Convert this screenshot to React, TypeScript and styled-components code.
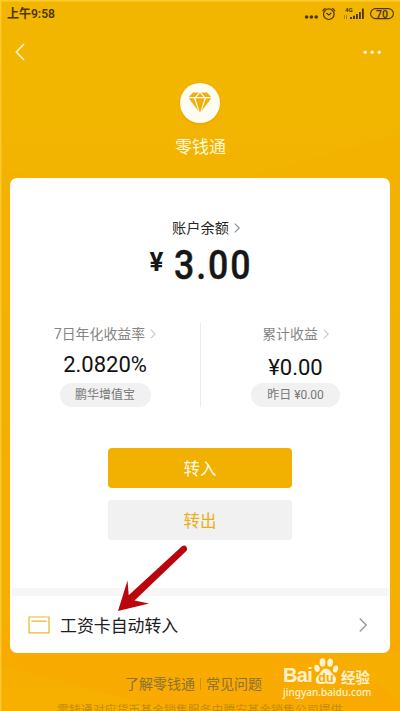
import React from 'react';
import styled, { createGlobalStyle } from 'styled-components';

const Global = createGlobalStyle`
  * { box-sizing: border-box; }
  body { margin: 0; font-family: Roboto, "Noto Sans CJK SC", sans-serif; }
`;

const Screen = styled.main`
  position: relative;
  display: flex;
  flex-direction: column;
  width: 400px;
  height: 711px;
  overflow: hidden;
  background: #f2b600;
  & > * { flex-shrink: 0; }
`;
const Backdrop = styled.svg`
  position: absolute;
  inset: 0;
`;
const StatusBar = styled.header`
  position: relative;
  display: flex;
  align-items: center;
  justify-content: space-between;
  height: 28px;
  padding: 0 6px 0 7px;
  color: #4a3508;
`;
const Clock = styled.span`
  font-size: 12px;
  line-height: 28px;
  font-weight: 600;
`;
const NavBar = styled.nav`
  position: relative;
  display: flex;
  align-items: center;
  justify-content: space-between;
  height: 47px;
  padding: 0 18px 0 15px;
`;
const Brand = styled.section`
  position: relative;
  display: flex;
  flex-direction: column;
  align-items: center;
  height: 103px;
  padding-top: 8px;
`;
const Badge = styled.div`
  display: flex;
  flex-shrink: 0;
  align-items: center;
  justify-content: center;
  width: 40px;
  height: 40px;
  border-radius: 50%;
  background: #fffdf3;
  box-shadow: 0 1px 2px #c8900066;
`;
const BrandName = styled.h1`
  margin: 12px 0 0 1px;
  font-size: 17px;
  line-height: 24px;
  font-weight: 400;
  color: #fff8da;
`;
const Card = styled.section`
  position: relative;
  display: flex;
  flex-direction: column;
  width: 380px;
  height: 475px;
  margin: 0 auto;
  border-radius: 7px;
  background: #fff;
`;
const Balance = styled.div`
  display: flex;
  flex-direction: column;
  align-items: center;
  height: 145px;
  padding-top: 40px;
`;
const Label = styled.div<{ $muted?: boolean }>`
  display: flex;
  align-items: center;
  gap: 5px;
  height: 20px;
  padding-left: ${p => (p.$muted ? 0 : 12)}px;
  font-size: ${p => (p.$muted ? 13.9 : 14.2)}px;
  line-height: 20px;
  white-space: nowrap;
  color: ${p => (p.$muted ? '#858585' : '#262626')};
`;
const Amount = styled.div`
  display: flex;
  align-items: flex-start;
  gap: 11px;
  width: 101px;
  margin-top: 3px;
  color: #171717;
  font-weight: 500;
  line-height: 48px;
`;
const Yen = styled.span`
  font-size: 26px;
  line-height: 43px;
  font-weight: 700;
`;
const Digits = styled.span`
  font-size: 41px;
  line-height: 49px;
  letter-spacing: 2.2px;
  transform: scaleX(0.87);
  transform-origin: left;
  -webkit-text-stroke: 0.4px #171717;
`;
const Stats = styled.div`
  display: grid;
  grid-template-columns: 190px 190px;
  height: 84px;
`;
const Stat = styled.div`
  display: flex;
  flex-direction: column;
  align-items: center;
  padding-top: 1px;
  & + & { border-left: 1px solid #ececec; }
`;
const Figure = styled.strong<{ $drop: number }>`
  height: 26px;
  margin-top: ${p => 8 + p.$drop}px;
  font-size: 22px;
  line-height: 26px;
  font-weight: 400;
  color: #111;
`;
const Pill = styled.span<{ $width: number; $rise: number }>`
  width: ${p => p.$width}px;
  height: 24px;
  margin-top: ${p => 5 - p.$rise}px;
  border-radius: 12px;
  background: #f1f1f1;
  text-align: center;
  font-size: 12px;
  line-height: 24px;
  color: #777;
`;
const Actions = styled.div`
  display: flex;
  flex-direction: column;
  gap: 12px;
  width: 184px;
  margin: 41px auto 0 98px;
`;
const Button = styled.button<{ $primary?: boolean }>`
  height: 40px;
  padding: 3px 0 0;
  border: 0;
  border-radius: 4px;
  font: 400 16.5px/37px Roboto, "Noto Sans CJK SC", sans-serif;
  background: ${p => (p.$primary ? '#f2b000' : '#f1f1f1')};
  color: ${p => (p.$primary ? '#fffbea' : '#ecae16')};
`;
const Band = styled.div`
  height: 8px;
  margin: 48px 1px 0 2px;
  background: #f6f6f6;
`;
const TransferRow = styled.div`
  display: flex;
  align-items: center;
  height: 57px;
  padding: 0 23px 0 18px;
`;
const RowText = styled.span`
  flex: 1;
  margin: 2px 0 0 10px;
  font-size: 16.9px;
  line-height: 26px;
  color: #202020;
`;
const Footer = styled.footer`
  position: relative;
  padding-top: 20px;
`;
const Links = styled.div`
  display: flex;
  align-items: center;
  margin-left: 125px;
  height: 22px;
  font-size: 14px;
  line-height: 22px;
  color: #8c7136;
`;
const Separator = styled.i`
  width: 1px;
  height: 12px;
  margin: 0 5px;
  background: #c89018;
`;
const Notice = styled.p`
  margin: 6px 0 0 57px;
  font-size: 11.9px;
  line-height: 18px;
  white-space: nowrap;
  color: #c68a0b;
`;
const Pointer = styled.svg`
  position: absolute;
  left: 110px;
  top: 540px;
`;
const Watermark = styled.div`
  position: absolute;
  left: 283px;
  top: 656px;
  width: 92px;
  color: #fff3cf;
`;
const WatermarkLogo = styled.div`
  display: flex;
  align-items: flex-end;
  height: 30px;
`;
const Latin = styled.span`
  width: 30px;
  font: 700 20px/22px "Liberation Sans", sans-serif;
  letter-spacing: -0.6px;
`;
const Han = styled.span`
  margin-left: 2px;
  font: 700 14.5px/19px "Noto Sans CJK SC", sans-serif;
`;
const Domain = styled.div`
  font: 500 10px/13px "Noto Sans", sans-serif;
  letter-spacing: 0.02px;
`;

const Chevron = ({ w = 6, h = 10, color = '#b5b5b5', stroke = 1.1 }) => (
  <svg width={w} height={h} viewBox={`0 0 ${w} ${h}`} fill="none" stroke={color} strokeWidth={stroke}>
    <path d={`M.8 .6 L${w - 0.8} ${h / 2} L.8 ${h - 0.6}`} />
  </svg>
);

const StatusIcons = () => (
  <svg width="92" height="20" viewBox="302 4 92 20" fill="none" stroke="#4a3508">
    <g fill="#4a3508" stroke="none">
      <circle cx="306.6" cy="17" r="1.8" />
      <circle cx="311.4" cy="17" r="1.8" />
      <circle cx="316.2" cy="17" r="1.8" />
      <path d="M350 19v-2h2v2zM353 19v-3.2h2V19zM356 19v-5h1.8v5zM359 19v-7h1.8v7zM362 19V8.4h1.8V19z" />
      <text x="345" y="12" fontSize="6" fontWeight="700" fontFamily="Roboto">4G</text>
      <text x="382" y="17.5" fontSize="10.5" fontWeight="600" fontFamily="Roboto" textAnchor="middle">70</text>
    </g>
    <circle cx="328.8" cy="14.2" r="5.3" strokeWidth="1.2" />
    <path d="M326.4 13l2.4 2 2.5-2M322.6 11.2a5 5 0 0 1 3-3M332 8.2a5 5 0 0 1 3 3" strokeWidth="1.1" />
    <path d="M344.5 15v4M346.5 19v-4" strokeWidth=".7" opacity=".6" />
    <rect x="370.6" y="8.6" width="22.8" height="10" rx="5" strokeWidth="1.1" />
  </svg>
);

const Diamond = () => (
  <svg width="24" height="22" viewBox="0 0 24 22" fill="#edb00f">
    <path d="M5 .5h5.8L7.2 5H.8zM12 .8L15.5 5h-7zM13.2.5H19L23.2 5h-6.4zM.7 6.2H6l4.6 13zM7.4 6.2h9.2L12 21zM18 6.2h5.3L13.4 19.2z" />
  </svg>
);

const Paw = () => (
  <svg width="26" height="30" viewBox="0 0 26 30" fill="#fff3cf">
    <ellipse cx="4" cy="12.3" rx="2.7" ry="3.6" transform="rotate(-15 4 12.3)" />
    <ellipse cx="9.5" cy="6.4" rx="2.9" ry="4.2" />
    <ellipse cx="17.2" cy="6.7" rx="2.9" ry="4.1" transform="rotate(8 17.2 6.7)" />
    <ellipse cx="22.5" cy="13" rx="2.6" ry="3.6" transform="rotate(15 22.5 13)" />
    <path d="M13 12.5c4 0 5 4.3 8 6.7 3.4 3 2.5 9-2.4 8.9-2.3 0-3.3-.6-5.6-.6s-3.8.6-6 .6c-4.5 0-5.5-5.7-2.2-8.6C8.1 16.7 9 12.5 13 12.5z" />
    <text x="13" y="25.6" textAnchor="middle" fontSize="12.5" fontWeight="700" fontFamily="Liberation Sans" fill="#f8aa00">du</text>
  </svg>
);

export default function App() {
  return (
    <>
      <Global />
      <Screen>
        <Backdrop width="400" height="711" viewBox="0 0 400 711">
          <defs>
            <linearGradient id="amber" x1="0" y1="0" x2="0" y2="1">
              <stop offset="0" stopColor="#f2b600" />
              <stop offset=".24" stopColor="#f2b400" />
              <stop offset=".65" stopColor="#f5ad00" />
              <stop offset="1" stopColor="#faaa00" />
            </linearGradient>
          </defs>
          <path fill="url(#amber)" d="M0 0h400v711H0z" />
          <path fill="#f3b000" opacity=".65" d="M400 134L225 183V600h175zM0 170l60 10v450H0z" />
          <path fill="#f3b300" opacity=".5" d="M0 665l175 46H0zM325 653l75 45v-45z" />
          <path stroke="#ffc92f" strokeWidth="1.4" fill="none" d="M.7 711V.7H400" />
        </Backdrop>
        <StatusBar>
          <Clock>上午9:58</Clock>
          <StatusIcons />
        </StatusBar>
        <NavBar>
          <svg width="10" height="18" viewBox="0 0 10 18" fill="none" stroke="#fff6d5" strokeWidth="1.5">
            <path d="M9 1L1.3 9 9 17" />
          </svg>
          <svg width="19" height="4" viewBox="0 0 19 4" fill="#fff8de">
            <circle cx="2.2" cy="2.3" r="1.7" />
            <circle cx="9.2" cy="2.3" r="1.7" />
            <circle cx="16.2" cy="2.3" r="1.7" />
          </svg>
        </NavBar>
        <Brand>
          <Badge><Diamond /></Badge>
          <BrandName>零钱通</BrandName>
        </Brand>
        <Card>
          <Balance>
            <Label>账户余额<Chevron color="#8c8c8c" /></Label>
            <Amount><Yen>¥</Yen><Digits>3.00</Digits></Amount>
          </Balance>
          <Stats>
            <Stat>
              <Label $muted>7日年化收益率<Chevron color="#c9c9c9" /></Label>
              <Figure $drop={0}>2.0820%</Figure>
              <Pill $width={91} $rise={0}>鹏华增值宝</Pill>
            </Stat>
            <Stat>
              <Label $muted>累计收益<Chevron color="#c9c9c9" /></Label>
              <Figure $drop={3}>¥0.00</Figure>
              <Pill $width={89} $rise={3}>昨日 ¥0.00</Pill>
            </Stat>
          </Stats>
          <Actions>
            <Button $primary>转入</Button>
            <Button>转出</Button>
          </Actions>
          <Band />
          <TransferRow>
            <svg width="22" height="18" viewBox="0 0 22 18" fill="none" stroke="#eab52c" strokeWidth="1.2">
              <path d="M1 1h20v15.8H1zM3.5 5.2h15" />
            </svg>
            <RowText>工资卡自动转入</RowText>
            <Chevron w={8} h={14} color="#999" stroke={1.4} />
          </TransferRow>
        </Card>
        <Footer>
          <Links>了解零钱通<Separator />常见问题</Links>
          <Notice>零钱通对应货币基金销售服务由腾安基金销售公司提供</Notice>
        </Footer>
        <Pointer width="80" height="76" viewBox="110 540 80 76">
          <path fill="#b9050b" d="M182 546.2Q185 544.6 186.5 547t-.5 4.2L134.5 600.5 149 603.5 118 611 127.5 580.5 128.7 595.3z" />
        </Pointer>
        <Watermark>
          <WatermarkLogo><Latin>Bai</Latin><Paw /><Han>经验</Han></WatermarkLogo>
          <Domain>jingyan.baidu.com</Domain>
        </Watermark>
      </Screen>
    </>
  );
}
